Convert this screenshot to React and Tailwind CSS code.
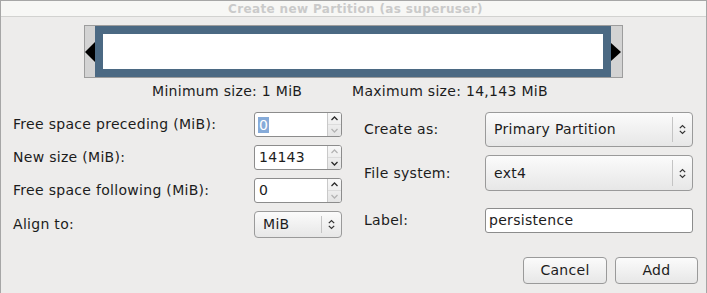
import React from 'react';

function Chevron({ up = true, enabled = true }) {
    return (
        <svg width="7" height="5" viewBox="0 0 7 5" className="block">
            <path
                d={up ? 'M0.5 4 L3.5 1 L6.5 4' : 'M0.5 1 L3.5 4 L6.5 1'}
                fill="none"
                stroke={enabled ? '#2a2a2a' : '#b4b4b4'}
                strokeWidth="1.3"
            />
        </svg>
    );
}

function UpDown() {
    return (
        <svg width="7" height="11" viewBox="0 0 7 11" className="block">
            <path d="M0.8 4.2 L3.5 1.5 L6.2 4.2" fill="none" stroke="#333" strokeWidth="1.2" />
            <path d="M0.8 6.8 L3.5 9.5 L6.2 6.8" fill="none" stroke="#333" strokeWidth="1.2" />
        </svg>
    );
}

function SpinEntry({ value, selected, upOn, downOn }) {
    return (
        <div className="flex h-[25px] w-[88px] border border-[#8c8c8c] rounded-[3px] bg-white overflow-hidden">
            <div className="flex-1 flex items-center pl-[3px]">
                {selected ? (
                    <span className="bg-[#86abd9] text-white leading-[16px] px-[1px]">{value}</span>
                ) : (
                    <span className="pl-[1px]">{value}</span>
                )}
            </div>
            <div className="w-[14px] border-l border-[#c9c9c9] flex flex-col bg-gradient-to-b from-[#f8f8f8] to-[#e4e4e4]">
                <div className="flex-1 flex items-center justify-center border-b border-[#dcdcdc]">
                    <Chevron up enabled={upOn} />
                </div>
                <div className="flex-1 flex items-center justify-center">
                    <Chevron up={false} enabled={downOn} />
                </div>
            </div>
        </div>
    );
}

function Combo({ text, className }) {
    return (
        <div className={`flex items-center border border-[#9a9a9a] rounded-[4px] bg-gradient-to-b from-[#fbfbfb] to-[#e7e7e7] ${className}`}>
            <div className="flex-1 pl-[8px]">{text}</div>
            <div className="w-px self-stretch my-[4px] bg-[#c4c4c4]" />
            <div className="w-[19px] flex justify-center">
                <UpDown />
            </div>
        </div>
    );
}

function App() {
    const leftRows = [
        { label: 'Free space preceding (MiB):', value: '0', selected: true, upOn: true, downOn: false },
        { label: 'New size (MiB):', value: '14143', upOn: false, downOn: true },
        { label: 'Free space following (MiB):', value: '0', upOn: true, downOn: false },
    ];

    return (
        <div className="w-[707px] h-[293px] overflow-hidden border-t border-x border-[#a6a6a6] bg-[#edeceb] flex flex-col font-['DejaVu_Sans',sans-serif] text-[14px] tracking-[0.3px] text-[#1c1c1c]">
            {/* title bar */}
            <div className="h-[16px] shrink-0 border-b border-[#d2d2d0] bg-[#f7f7f5] flex items-center justify-center">
                <span className="text-[12px] font-bold tracking-[0.35px] text-[#cacaca] leading-[14px] ml-[4px]">Create new Partition (as superuser)</span>
            </div>

            {/* partition bar */}
            <div className="mt-[8px] ml-[83px] w-[539px] h-[53px] border border-[#9d9d9d] flex">
                <div className="w-[10px] bg-[#d3d3d3] flex items-center">
                    <svg width="10" height="20" viewBox="0 0 10 20" className="block">
                        <path d="M0 10 L10 0 L10 20 Z" fill="#000" />
                    </svg>
                </div>
                <div className="flex-1 bg-[#4b6983] p-[8px]">
                    <div className="w-full h-full bg-white" />
                </div>
                <div className="w-[11px] bg-[#d3d3d3] flex items-center">
                    <svg width="10" height="18" viewBox="0 0 10 18" className="block">
                        <path d="M0 0 L10 9 L0 18 Z" fill="#000" />
                    </svg>
                </div>
            </div>

            {/* size labels */}
            <div className="mt-[6px] h-[15px] leading-[15px] flex ml-[151px]">
                <span className="w-[200px]">Minimum size: 1 MiB</span>
                <span>Maximum size: 14,143 MiB</span>
            </div>

            {/* form */}
            <div className="mt-[13px] flex">
                <div className="ml-[12px] w-[329px] flex flex-col gap-[8px]">
                    {leftRows.map(row => (
                        <div key={row.label} className="flex items-center justify-between">
                            <span>{row.label}</span>
                            <SpinEntry {...row} />
                        </div>
                    ))}
                    <div className="flex items-center justify-between">
                        <span>Align to:</span>
                        <Combo text="MiB" className="w-[88px] h-[27px]" />
                    </div>
                </div>

                <div className="ml-[22px] w-[329px] flex flex-col">
                    <div className="flex items-center justify-between">
                        <span>Create as:</span>
                        <Combo text="Primary Partition" className="w-[208px] h-[35px]" />
                    </div>
                    <div className="mt-[8px] flex items-center justify-between">
                        <span>File system:</span>
                        <Combo text="ext4" className="w-[208px] h-[36px]" />
                    </div>
                    <div className="mt-[17px] flex items-center justify-between">
                        <span>Label:</span>
                        <div className="w-[208px] h-[25px] border border-[#8c8c8c] rounded-[3px] bg-white flex items-center pl-[3px]">
                            persistence
                        </div>
                    </div>
                </div>
            </div>

            {/* buttons */}
            <div className="mt-[19px] flex justify-end gap-[8px] pr-[8px]">
                <button className="w-[84px] h-[27px] border border-[#9a9a9a] rounded-[4px] bg-gradient-to-b from-[#fbfbfb] to-[#e7e7e7]">
                    Cancel
                </button>
                <button className="w-[83px] h-[27px] border border-[#9a9a9a] rounded-[4px] bg-gradient-to-b from-[#fbfbfb] to-[#e7e7e7]">
                    Add
                </button>
            </div>
        </div>
    );
}

export default App;
